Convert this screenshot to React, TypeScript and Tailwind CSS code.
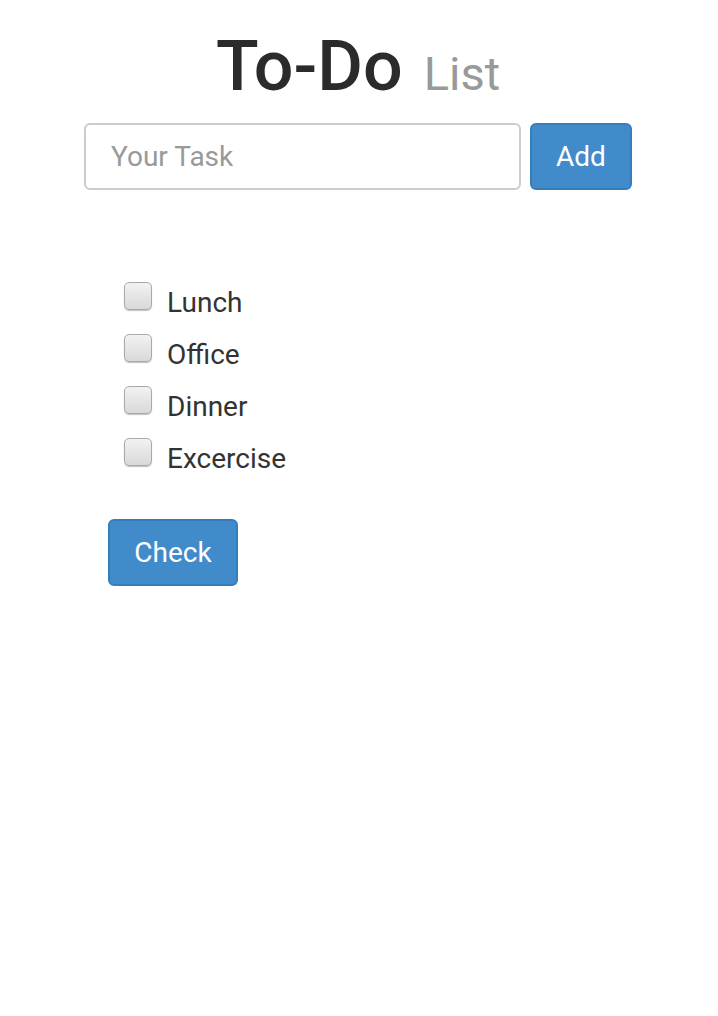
import React from 'react';

const tasks = ['Lunch', 'Office', 'Dinner', 'Excercise'];

const FakeCheckbox: React.FC = () => (
  <span className="mt-[5px] block h-[28px] w-[28px] shrink-0 rounded-[5px] border border-[#a9a9a9] bg-gradient-to-b from-[#f2f2f2] to-[#d9d9d9] shadow-[0_1px_1px_rgba(0,0,0,0.25)]" />
);

export default function App() {
  return (
    <div className="min-h-screen bg-white font-['Roboto',sans-serif] text-[#333]">
      <div className="ml-[84px] w-[548px] pt-[31px]">
        <h1 className="text-center text-[70px] leading-none">
          <span className="font-medium text-[#2b2b2b]">To-Do</span>
          <span className="ml-[21px] text-[47px] font-normal text-[#999]">List</span>
        </h1>

        <div className="mt-[22px] flex gap-[9px]">
          <input
            type="text"
            placeholder="Your Task"
            className="h-[67px] flex-1 rounded-[6px] border-2 border-[#ccc] px-[25px] text-[28px] text-[#333] outline-none placeholder:text-[#999]"
          />
          <button className="h-[67px] w-[102px] rounded-[6px] border-2 border-[#357ebd] bg-[#428bca] text-[28px] text-white">
            Add
          </button>
        </div>

        <ul className="mt-[87px] pl-[40px]">
          {tasks.map((t) => (
            <li key={t} className="flex h-[52px] items-start gap-[15px]">
              <FakeCheckbox />
              <span className="text-[28px] leading-[52px] text-[#333]">{t}</span>
            </li>
          ))}
        </ul>

        <div className="mt-[34px] pl-[24px]">
          <button className="h-[67px] w-[130px] rounded-[6px] border-2 border-[#357ebd] bg-[#428bca] text-[28px] text-white">
            Check
          </button>
        </div>
      </div>
    </div>
  );
}
